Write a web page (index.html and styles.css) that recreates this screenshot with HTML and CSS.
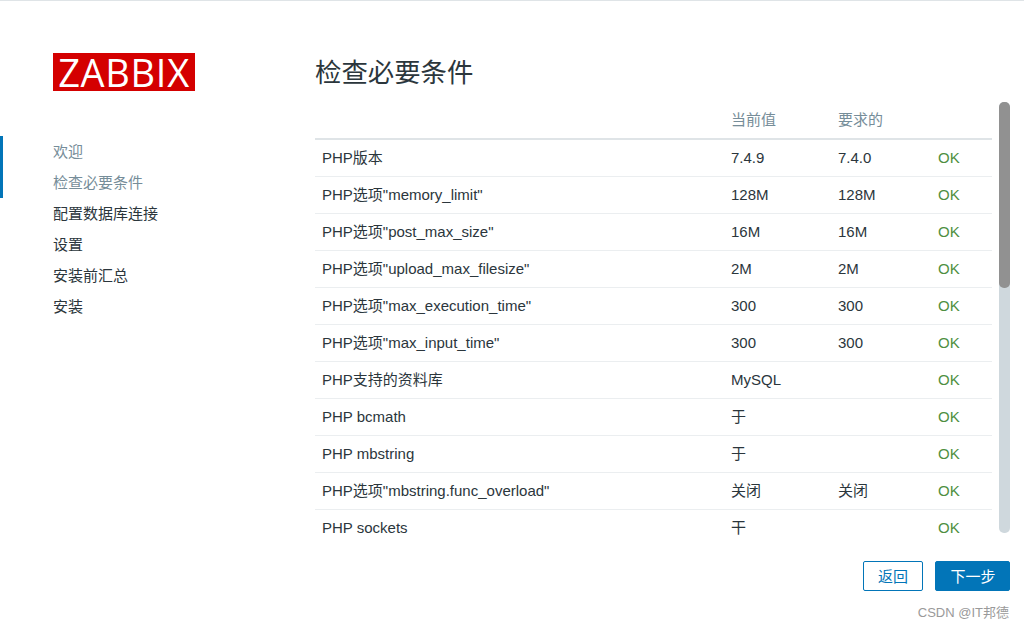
FILE: index.html
```html
<!DOCTYPE html>
<html lang="zh">
<head>
<meta charset="utf-8">
<title>检查必要条件</title>
<link rel="stylesheet" href="styles.css">
</head>
<body>
<div class="page">
  <aside class="sidebar">
    <div class="logo">ZABBIX</div>
    <ul class="steps">
      <li class="step done">欢迎</li>
      <li class="step done">检查必要条件</li>
      <li class="step">配置数据库连接</li>
      <li class="step">设置</li>
      <li class="step">安装前汇总</li>
      <li class="step">安装</li>
      <li class="marker"></li>
    </ul>
  </aside>
  <main class="main">
    <h1 class="title">检查必要条件</h1>
    <div class="scroll-wrap">
      <div class="scroller">
        <table class="reqs">
          <thead>
            <tr><th class="c1"></th><th class="c2">当前值</th><th class="c3">要求的</th><th class="c4"></th></tr>
          </thead>
          <tbody>
            <tr><td>PHP版本</td><td>7.4.9</td><td>7.4.0</td><td class="ok">OK</td></tr>
            <tr><td>PHP选项"memory_limit"</td><td>128M</td><td>128M</td><td class="ok">OK</td></tr>
            <tr><td>PHP选项"post_max_size"</td><td>16M</td><td>16M</td><td class="ok">OK</td></tr>
            <tr><td>PHP选项"upload_max_filesize"</td><td>2M</td><td>2M</td><td class="ok">OK</td></tr>
            <tr><td>PHP选项"max_execution_time"</td><td>300</td><td>300</td><td class="ok">OK</td></tr>
            <tr><td>PHP选项"max_input_time"</td><td>300</td><td>300</td><td class="ok">OK</td></tr>
            <tr><td>PHP支持的资料库</td><td>MySQL</td><td></td><td class="ok">OK</td></tr>
            <tr><td>PHP bcmath</td><td>于</td><td></td><td class="ok">OK</td></tr>
            <tr><td>PHP mbstring</td><td>于</td><td></td><td class="ok">OK</td></tr>
            <tr><td>PHP选项"mbstring.func_overload"</td><td>关闭</td><td>关闭</td><td class="ok">OK</td></tr>
            <tr class="last"><td>PHP sockets</td><td>干</td><td></td><td class="ok">OK</td></tr>
          </tbody>
        </table>
      </div>
      <div class="track"><div class="thumb"></div></div>
    </div>
    <div class="actions">
      <button class="btn btn-alt" type="button">返回</button>
      <button class="btn btn-primary" type="button">下一步</button>
    </div>
  </main>
</div>
<div class="watermark">CSDN @IT邦德</div>
</body>
</html>
```
FILE: styles.css
```css
* { box-sizing: border-box; }
html, body { margin: 0; height: 100%; overflow: hidden; }
body {
  background: #fff;
  color: #2b363c;
  font-family: "Liberation Sans", "Noto Sans CJK SC", sans-serif;
  font-size: 15px;
  line-height: 18px;
}
.page {
  display: flex;
  height: 628px;
  border-top: 1px solid #dfe4e7;
}
.sidebar { width: 315px; flex: none; padding-top: 52px; }
.logo {
  width: 142px;
  height: 38px;
  margin-left: 53px;
  background: #d40000;
  color: #fff;
  font-family: "Open Sans", sans-serif;
  font-size: 38px;
  line-height: 38px;
  text-align: center;
  letter-spacing: 0.7px;
}
.steps {
  position: relative;
  list-style: none;
  margin: 45px 0 0;
  padding: 0;
}
.step {
  height: 31px;
  line-height: 31px;
  padding-left: 53px;
  color: #2b363c;
}
.step.done { color: #768d99; }
.marker {
  position: absolute;
  left: 0;
  top: 0;
  width: 3px;
  height: 62px;
  background: #0275b8;
}
.main { flex: 1; min-width: 0; display: flex; flex-direction: column; }
.title {
  margin: 0;
  padding-top: 54px;
  height: 101px;
  font-size: 26.4px;
  line-height: 36px;
  font-weight: 400;
  color: #2b363c;
}
.scroll-wrap {
  display: flex;
  gap: 7px;
  width: 695px;
  height: 431px;
  flex: none;
}
.scroller { width: 677px; height: 431px; }
.track {
  width: 11px;
  height: 431px;
  background: #cfd8dd;
  border-radius: 5px;
}
.thumb {
  height: 186px;
  background: #919191;
  border-radius: 5px;
}
.reqs {
  width: 677px;
  border-collapse: collapse;
  table-layout: fixed;
}
.reqs th {
  height: 37px;
  padding: 0 7px;
  text-align: left;
  font-weight: 400;
  color: #768d99;
  border-bottom: 2px solid #dfe4e7;
}
.reqs td {
  height: 37px;
  padding: 0 7px;
  border-bottom: 1px solid #ebeef0;
}
.reqs .last td { height: 37px; border-bottom: 0; }
.c1 { width: 409px; }
.c2 { width: 107px; }
.c3 { width: 100px; }
.reqs td.ok { color: #4f8f3f; }
.actions {
  display: flex;
  justify-content: flex-end;
  gap: 12px;
  width: 695px;
  margin-top: 28px;
}
.btn {
  height: 30px;
  padding: 0 0 2px;
  border-radius: 2px;
  font-family: inherit;
  font-size: 15px;
}
.btn-alt { width: 60px; background: #fff; border: 1px solid #0275b8; color: #0275b8; }
.btn-primary { width: 75px; padding-left: 1px; background: #0275b8; border: 1px solid #0275b8; color: #fff; }
.watermark {
  position: absolute;
  right: 15px;
  bottom: 7px;
  font-size: 13px;
  line-height: 16px;
  color: #9a9a9a;
}
```
